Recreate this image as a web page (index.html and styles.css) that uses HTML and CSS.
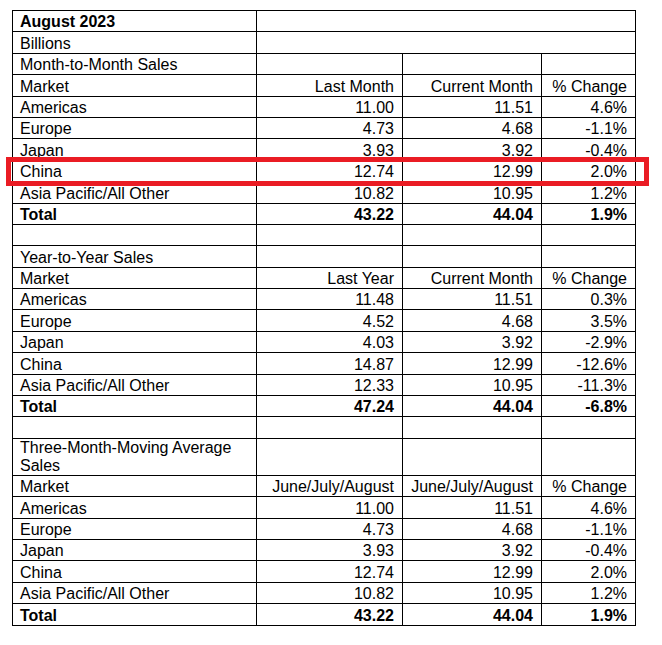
FILE: index.html
```html
<!DOCTYPE html>
<html>
<head>
<meta charset="utf-8">
<link rel="stylesheet" href="styles.css">
</head>
<body>
<div class="page">
<table class="sales">
<colgroup>
<col class="c1"><col class="c2"><col class="c3"><col class="c4">
</colgroup>
<tbody>
<tr class="bold"><td>August 2023</td><td colspan="3"></td></tr>
<tr><td>Billions</td><td colspan="3"></td></tr>
<tr><td>Month-to-Month Sales</td><td></td><td></td><td></td></tr>
<tr><td>Market</td><td class="num">Last Month</td><td class="num">Current Month</td><td class="num">% Change</td></tr>
<tr><td>Americas</td><td class="num">11.00</td><td class="num">11.51</td><td class="num">4.6%</td></tr>
<tr><td>Europe</td><td class="num">4.73</td><td class="num">4.68</td><td class="num">-1.1%</td></tr>
<tr><td>Japan</td><td class="num">3.93</td><td class="num">3.92</td><td class="num">-0.4%</td></tr>
<tr><td>China</td><td class="num">12.74</td><td class="num">12.99</td><td class="num">2.0%</td></tr>
<tr><td>Asia Pacific/All Other</td><td class="num">10.82</td><td class="num">10.95</td><td class="num">1.2%</td></tr>
<tr class="bold"><td>Total</td><td class="num">43.22</td><td class="num">44.04</td><td class="num">1.9%</td></tr>
<tr><td></td><td></td><td></td><td></td></tr>
<tr><td>Year-to-Year Sales</td><td></td><td></td><td></td></tr>
<tr><td>Market</td><td class="num">Last Year</td><td class="num">Current Month</td><td class="num">% Change</td></tr>
<tr><td>Americas</td><td class="num">11.48</td><td class="num">11.51</td><td class="num">0.3%</td></tr>
<tr><td>Europe</td><td class="num">4.52</td><td class="num">4.68</td><td class="num">3.5%</td></tr>
<tr><td>Japan</td><td class="num">4.03</td><td class="num">3.92</td><td class="num">-2.9%</td></tr>
<tr><td>China</td><td class="num">14.87</td><td class="num">12.99</td><td class="num">-12.6%</td></tr>
<tr><td>Asia Pacific/All Other</td><td class="num">12.33</td><td class="num">10.95</td><td class="num">-11.3%</td></tr>
<tr class="bold"><td>Total</td><td class="num">47.24</td><td class="num">44.04</td><td class="num">-6.8%</td></tr>
<tr><td></td><td></td><td></td><td></td></tr>
<tr><td>Three-Month-Moving Average Sales</td><td></td><td></td><td></td></tr>
<tr><td>Market</td><td class="num">June/July/August</td><td class="num">June/July/August</td><td class="num">% Change</td></tr>
<tr><td>Americas</td><td class="num">11.00</td><td class="num">11.51</td><td class="num">4.6%</td></tr>
<tr><td>Europe</td><td class="num">4.73</td><td class="num">4.68</td><td class="num">-1.1%</td></tr>
<tr><td>Japan</td><td class="num">3.93</td><td class="num">3.92</td><td class="num">-0.4%</td></tr>
<tr><td>China</td><td class="num">12.74</td><td class="num">12.99</td><td class="num">2.0%</td></tr>
<tr><td>Asia Pacific/All Other</td><td class="num">10.82</td><td class="num">10.95</td><td class="num">1.2%</td></tr>
<tr class="bold"><td>Total</td><td class="num">43.22</td><td class="num">44.04</td><td class="num">1.9%</td></tr>
</tbody>
</table>
<div class="highlight"></div>
</div>
</body>
</html>
```
FILE: styles.css
```css
html, body {
  margin: 0;
  padding: 0;
  background: #fff;
}
.page {
  position: relative;
  padding: 10px 0 0 12px;
  font-family: "Liberation Sans", Arial, sans-serif;
  font-size: 16px;
  color: #000;
}
.sales {
  width: 623px;
  border-collapse: collapse;
  table-layout: fixed;
  border: 1px solid #000;
}
.c1 { width: 244px; }
.c2 { width: 146px; }
.c3 { width: 139px; }
.c4 { width: 94px; }
.sales td {
  border: 1px solid #000;
  height: 20.4px;
  padding: 0 8px 0 7px;
  line-height: 18px;
  vertical-align: bottom;
  white-space: normal;
}
.sales td.num {
  text-align: right;
  white-space: nowrap;
}
.sales tr.bold td {
  font-weight: bold;
}
.highlight {
  position: absolute;
  left: 6px;
  top: 157px;
  width: 633px;
  height: 19px;
  border: 5px solid #ea1c24;
}
```
